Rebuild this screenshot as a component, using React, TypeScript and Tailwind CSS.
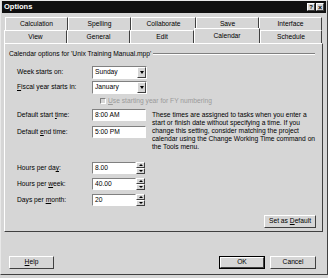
import React from "react";

const F = { fontFamily: '"Liberation Sans", Arial, sans-serif' };

function Tab({ label, w, selected }: { label: string; w: string; selected?: boolean }) {
  return (
    <div
      className={`${w} ${selected ? "h-[15px] -mt-[2px] bg-[#d6d6d6] z-10 border-b-0" : "h-[13px]"} flex items-center justify-center border-t border-l border-t-white border-l-white border-r border-r-[#404040] text-[6.7px] text-black shrink-0`}
    >
      {label}
    </div>
  );
}

function Combo({ value }: { value: string }) {
  return (
    <div className="w-[55px] h-[13px] bg-white border border-t-[#808080] border-l-[#808080] border-b-white border-r-white flex items-center">
      <div className="flex-1 pl-[2px]">{value}</div>
      <div className="w-[9px] h-[11px] bg-[#d6d6d6] border border-t-white border-l-white border-b-[#404040] border-r-[#404040] flex items-center justify-center">
        <div className="w-0 h-0 border-l-[2.5px] border-r-[2.5px] border-t-[3px] border-l-transparent border-r-transparent border-t-black" />
      </div>
    </div>
  );
}

function TextBox({ value, w }: { value: string; w: string }) {
  return (
    <div className={`${w} h-[12px] bg-white border border-t-[#808080] border-l-[#808080] border-b-white border-r-white flex items-center pl-[2px]`}>
      {value}
    </div>
  );
}

function Spin({ value }: { value: string }) {
  return (
    <div className="flex items-center">
      <TextBox value={value} w="w-[44px]" />
      <div className="w-[9px] h-[12px] flex flex-col">
        <div className="flex-1 bg-[#d6d6d6] border-[0.5px] border-t-white border-l-white border-b-[#404040] border-r-[#404040] flex items-center justify-center">
          <div className="w-0 h-0 border-l-[2px] border-r-[2px] border-b-[2px] border-l-transparent border-r-transparent border-b-black" />
        </div>
        <div className="flex-1 bg-[#d6d6d6] border-[0.5px] border-t-white border-l-white border-b-[#404040] border-r-[#404040] flex items-center justify-center">
          <div className="w-0 h-0 border-l-[2px] border-r-[2px] border-t-[2px] border-l-transparent border-r-transparent border-t-black" />
        </div>
      </div>
    </div>
  );
}

function Btn({ children, w, def }: { children: React.ReactNode; w: string; def?: boolean }) {
  return (
    <div className={`${w} h-[13px] ${def ? "border border-black" : ""}`}>
      <div className="w-full h-full bg-[#d6d6d6] border border-t-white border-l-white border-b-[#404040] border-r-[#404040] flex items-center justify-center text-[6.7px]">
        <span className="whitespace-pre">{children}</span>
      </div>
    </div>
  );
}

export default function App() {
  return (
    <div style={F} className="w-[328px] h-[278px] bg-[#d6d6d6] text-black overflow-hidden">
      <div className="w-[328px] h-[275px] border border-t-[#e8e8e8] border-l-[#e8e8e8] border-b-[#404040] border-r-[#404040] flex flex-col">
        {/* title bar */}
        <div className="h-[12px] mx-[1px] bg-[#101010] flex items-center justify-between pl-[2px] pr-[2px]">
          <span className="text-white font-bold text-[7.5px] leading-none">Options</span>
          <div className="flex gap-[1px]">
            <div className="w-[8px] h-[8px] bg-[#d6d6d6] border-[0.5px] border-t-white border-l-white border-b-[#404040] border-r-[#404040] flex items-center justify-center text-[6px] font-bold leading-none">?</div>
            <div className="w-[8px] h-[8px] bg-[#d6d6d6] border-[0.5px] border-t-white border-l-white border-b-[#404040] border-r-[#404040] flex items-center justify-center text-[7px] font-bold leading-none">×</div>
          </div>
        </div>

        <div className="pl-[3px] pr-[4px] pt-[4px]">
          {/* tab row 1 */}
          <div className="flex pl-[1px]">
            <Tab label="Calculation" w="w-[63px]" />
            <Tab label="Spelling" w="w-[63px]" />
            <Tab label="Collaborate" w="w-[65px]" />
            <Tab label="Save" w="w-[63px]" />
            <Tab label="Interface" w="w-[63px]" />
          </div>
          {/* tab row 2 */}
          <div className="flex relative">
            <Tab label="View" w="w-[63px]" />
            <Tab label="General" w="w-[63px]" />
            <Tab label="Edit" w="w-[64px]" />
            <Tab label="Calendar" w="w-[66px]" selected />
            <Tab label="Schedule" w="w-[62px]" />
          </div>
          {/* panel */}
          <div className="h-[189px] border border-t-white border-l-white border-b-[#404040] border-r-[#404040] flex flex-col text-[6.7px]">
            <div className="mt-[6px] ml-[4px] mr-[7px] h-[8px] flex items-center gap-[2px]">
              <span className="whitespace-nowrap leading-none">Calendar options for 'Unix Training Manual.mpp'</span>
              <div className="flex-1 h-[2px] border-t border-t-[#808080] border-b border-b-white" />
            </div>

            <div className="pl-[12px] mt-[7px] flex flex-col">
              <div className="flex items-center h-[14px]">
                <span className="w-[75px]">Week starts on:</span>
                <Combo value="Sunday" />
              </div>
              <div className="flex items-center h-[13px] mt-[2px]">
                <span className="w-[75px]"><u>F</u>iscal year starts in:</span>
                <Combo value="January" />
              </div>
              <div className="flex items-center h-[10px] mt-[2px] pl-[83px] gap-[2px] text-[#9a9a9a]">
                <div className="w-[6px] h-[6px] border border-t-[#808080] border-l-[#808080] border-b-white border-r-white bg-[#d6d6d6]" />
                <span><u>U</u>se starting year for FY numbering</span>
              </div>
              <div className="flex mt-[3px]">
                <div className="flex flex-col gap-[5px]">
                  <div className="flex items-center h-[12px]">
                    <span className="w-[75px]">Default start <u>t</u>ime:</span>
                    <TextBox value="8:00 AM" w="w-[54px]" />
                  </div>
                  <div className="flex items-center h-[12px]">
                    <span className="w-[75px]">Default <u>e</u>nd time:</span>
                    <TextBox value="5:00 PM" w="w-[54px]" />
                  </div>
                </div>
                <div className="ml-[6px] mt-[2px] leading-[8px] whitespace-nowrap">
                  These times are assigned to tasks when you enter a<br />
                  start or finish date without specifying a time. If you<br />
                  change this setting, consider matching the project<br />
                  calendar using the Change Working Time command on<br />
                  the Tools menu.
                </div>
              </div>
              <div className="flex flex-col gap-[4px] mt-[11px]">
                <div className="flex items-center h-[12px]">
                  <span className="w-[75px]">Hours per da<u>y</u>:</span>
                  <Spin value="8.00" />
                </div>
                <div className="flex items-center h-[12px]">
                  <span className="w-[75px]">Hours per <u>w</u>eek:</span>
                  <Spin value="40.00" />
                </div>
                <div className="flex items-center h-[12px]">
                  <span className="w-[75px]">Days per <u>m</u>onth:</span>
                  <Spin value="20" />
                </div>
              </div>
            </div>
            <div className="flex justify-end mr-[6px] mt-[9px]">
              <Btn w="w-[52px]">Set as <u>D</u>efault</Btn>
            </div>
          </div>
        </div>

        {/* bottom buttons */}
        <div className="flex items-center mt-[24px] pl-[8px] pr-[11px]">
          <Btn w="w-[45px]"><u>H</u>elp</Btn>
          <div className="flex-1" />
          <Btn w="w-[46px]" def>OK</Btn>
          <div className="w-[5px]" />
          <Btn w="w-[46px]">Cancel</Btn>
        </div>
      </div>
    </div>
  );
}
